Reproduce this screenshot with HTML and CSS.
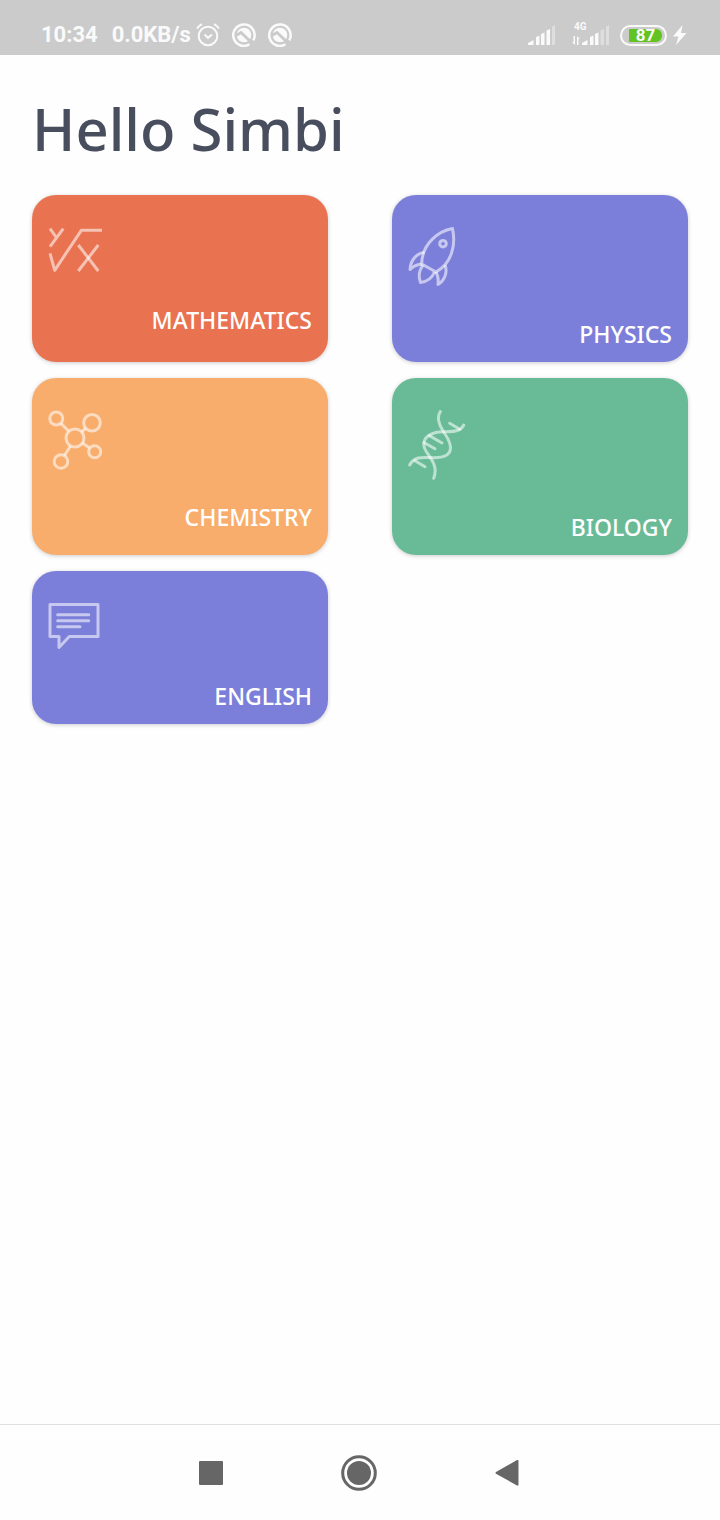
FILE: index.html
```html
<!DOCTYPE html>
<html lang="en">
<head>
<meta charset="utf-8">
<meta name="viewport" content="width=device-width, initial-scale=1">
<title>Hello Simbi</title>
<link rel="stylesheet" href="styles.css">
</head>
<body>
<header class="status">
  <div class="status-group">
    <span class="clock">10:34</span>
    <span class="speed">0.0KB/s</span>
    <svg class="alarm" width="24" height="24" viewBox="0 0 24 24" aria-hidden="true">
      <circle cx="12" cy="13" r="9.3"/><path d="M8.500 11.500l3.500 3.300 4-3.300M1 5.500Q2.500 3 6 1.200M23 5.500Q21.500 3 18 1.200"/>
    </svg>
    <svg class="badge" width="24" height="24" viewBox="0 0 24 24" aria-hidden="true">
      <path class="ring" d="M17.500 21.300A10.700 10.700 0 1 1 21.300 17.300"/>
      <circle class="fill" cx="12" cy="12" r="7.300"/>
      <path class="gap" d="M4 12.500L9 9.500 20 20"/>
    </svg>
    <svg class="badge" width="24" height="24" viewBox="0 0 24 24" aria-hidden="true">
      <path class="ring" d="M17.500 21.300A10.700 10.700 0 1 1 21.300 17.300"/>
      <circle class="fill" cx="12" cy="12" r="7.300"/>
      <path class="gap" d="M4 12.500L9 9.500 20 20"/>
    </svg>
  </div>
  <div class="status-group">
    <svg class="signal" width="28" height="20" viewBox="0 0 28 20" aria-hidden="true">
      <path d="M0 20v-2l5.500-3v5zM8 20v-8l3.500-1.500V20zM13 20V9l3.500-1.500V20zM18.500 20V5.500L22 4v16z"/><path class="dim" d="M24 20V2l3-2v20z"/>
    </svg>
    <div class="mobile">
      <span class="net">4G</span>
      <div class="mobile-row">
        <svg class="signal" width="8" height="9" viewBox="0 0 8 9" aria-hidden="true"><path d="M1.500 0h1.500v9L0 6h1.500zM5 9V0l3 3H6.500v6z"/></svg>
        <svg class="signal" width="28" height="20" viewBox="0 0 28 20" aria-hidden="true">
          <path d="M0 20v-2l5.500-3v5zM8 20v-8l3.500-1.500V20zM13 20V9l3.500-1.500V20z"/><path class="dim" d="M18.500 20V5.500L22 4v16zM24 20V2l3-2v20z"/>
        </svg>
      </div>
    </div>
    <div class="battery"><span class="level">87</span></div>
    <svg class="signal" width="14" height="20" viewBox="0 0 14 20" aria-hidden="true"><path d="M9.500 0L0 11.500h5.500L3 20 13.500 8H8z"/></svg>
  </div>
</header>

<main class="content">
  <h1 class="greeting">Hello Simbi</h1>
  <div class="subjects">
    <button type="button" class="card card-math">
      <svg class="icon" width="56" height="46" viewBox="0 0 56 46" aria-hidden="true">
        <path d="M2 1.700l6.300 8.600M15.300 1.700L2 19.700"/><path d="M2 26.300l4.700 17L33.300 3.300H54"/><path d="M30.300 18l20 26"/><path d="M50.300 18l-20 26"/>
      </svg>
      <span class="label">MATHEMATICS</span>
    </button>
    <button type="button" class="card card-violet">
      <svg class="icon" width="56" height="60" viewBox="0 0 56 60" aria-hidden="true">
        <path d="M44.500 1.500C31 4 14 16 13.700 37L28 45C44 36 48 18 44.500 1.500z"/><circle cx="35" cy="16.700" r="3.300"/>
        <path d="M16.500 25.500C8 26 2.500 34 2 42.500Q6 38 13.700 37"/><path d="M37 38C40 46 36 54 30 57.500Q31 51 28 45"/><path d="M15 38Q9 46 12.500 55.500Q23 54 26.500 45"/>
      </svg>
      <span class="label">PHYSICS</span>
    </button>
    <button type="button" class="card card-amber">
      <svg class="icon" width="56" height="60" viewBox="0 0 56 60" aria-hidden="true">
        <circle cx="8.300" cy="8.500" r="6.500"/><circle cx="44" cy="12.700" r="8.300"/><circle cx="27" cy="28" r="9"/><circle cx="46.700" cy="41.700" r="6"/><circle cx="13" cy="51.500" r="6.800"/>
        <path d="M12.800 13.200l8.200 8.300M37.800 18.300L33.500 22M34.300 33l7.500 5M22.500 36l-6 9.500"/>
      </svg>
      <span class="label">CHEMISTRY</span>
    </button>
    <button type="button" class="card card-green">
      <svg class="icon icon-round" width="60" height="70" viewBox="0 0 60 70" aria-hidden="true">
        <path d="M32.300 1.700C28 8 31 15 36 22.500C42 31 46 41 38 45.500C30 50 19 46 10.300 48Q4 50 1.700 55"/>
        <path d="M55.700 15C51 25 37 20 27 22.700C16 25.500 13 34 18.500 42C24 50 30 57 25.700 68.300"/>
        <path d="M41.700 13.300l10 6M21.500 25.700L34 33M16.300 32.700l10.700 6M7 50.700l10 6"/>
      </svg>
      <span class="label">BIOLOGY</span>
    </button>
    <button type="button" class="card card-violet">
      <svg class="icon" width="56" height="46" viewBox="0 0 56 46" aria-hidden="true">
        <path d="M2 1.500H50V33.500H21.300L11 44.500V33.500H2z"/><path d="M9.700 11.700h31M9.700 17.700h31M9.700 23.700H32" stroke-linecap="round"/>
      </svg>
      <span class="label">ENGLISH</span>
    </button>
  </div>
</main>

<nav class="navbar" aria-label="System">
  <button type="button" class="nav-button" aria-label="Recent apps"><svg width="24" height="24" viewBox="0 0 24 24"><rect width="24" height="24" rx="1"/></svg></button>
  <button type="button" class="nav-button" aria-label="Home"><svg width="36" height="36" viewBox="0 0 36 36"><circle cx="18" cy="18" r="12"/><circle class="outline" cx="18" cy="18" r="16.300"/></svg></button>
  <button type="button" class="nav-button" aria-label="Back"><svg width="24" height="28" viewBox="0 0 24 28"><path d="M1 13L22 1Q23.500 0.500 23.500 2V25.500Q23.500 27 22 26.500L1 14.700Q0 13.900 1 13z"/></svg></button>
</nav>
</body>
</html>
```
FILE: styles.css
```css
* { box-sizing: border-box; }

body {
  margin: 0;
  min-height: 100vh;
  display: flex;
  flex-direction: column;
  background: #fefefe;
  font-family: "Noto Sans", sans-serif;
}

button {
  border: 0;
  font: inherit;
  cursor: pointer;
}

.status {
  display: flex;
  justify-content: space-between;
  padding: 20px 33px 5px 41px;
  background: #cbcbcb;
  color: #fafafa;
  font-family: Roboto, sans-serif;
  font-weight: 700;
}

.status-group {
  display: flex;
  align-items: center;
  height: 30px;
}

.clock, .speed {
  font-size: 22px;
  line-height: 30px;
}

.speed { margin-left: 14px; }

.alarm {
  margin-left: 5px;
  fill: none;
  stroke: #fafafa;
  stroke-width: 2;
}

.badge { margin-left: 12px; }

.badge .ring {
  fill: none;
  stroke: #fafafa;
  stroke-width: 2.5;
}

.badge .fill { fill: #fafafa; }

.badge .gap {
  fill: none;
  stroke: #cbcbcb;
  stroke-width: 3;
}

.signal {
  flex: none;
  fill: #fafafa;
}

.signal .dim { fill: #dedede; }

.mobile {
  position: relative;
  margin-left: 16px;
}

.mobile-row {
  display: flex;
  align-items: flex-end;
  gap: 2px;
}

.net {
  position: absolute;
  top: -3px;
  left: 2px;
  font-size: 10px;
  line-height: 10px;
}

.battery {
  display: flex;
  width: 47px;
  height: 21px;
  margin: 0 6px 0 10px;
  padding: 2px 3px 2px 7px;
  border: 2px solid #fafafa;
  border-radius: 11px;
}

.level {
  flex: 1;
  border-radius: 1px 6px 6px 1px;
  background: #62c422;
  font-size: 17px;
  line-height: 13px;
  text-align: center;
}

.content {
  flex: 1;
  padding: 40px 32px;
}

.greeting {
  margin: 0 0 32px;
  color: #484e5e;
  font-size: 58px;
  font-weight: 500;
  line-height: 68px;
}

.subjects {
  display: grid;
  grid-template-columns: 1fr 1fr;
  gap: 16px 64px;
}

.card {
  display: flex;
  flex-direction: column;
  justify-content: flex-start;
  align-items: flex-start;
  gap: 32px;
  padding: 32px 16px 13px;
  border-radius: 24px;
  color: #fff;
  box-shadow: 0 1px 4px rgba(0, 0, 0, 0.2);
}

.card-math { background: #e97251; }
.card-violet { background: #7c7fd9; }
.card-amber { background: #f8ad6d; }
.card-green { background: #69bb98; }

.icon {
  fill: none;
  stroke: rgba(255, 255, 255, 0.57);
  stroke-width: 3;
  stroke-linejoin: round;
}

.icon-round { stroke-linecap: round; }

.label {
  align-self: flex-end;
  font-size: 23px;
  font-weight: 500;
  line-height: 30px;
}

.navbar {
  display: flex;
  justify-content: center;
  padding-right: 2px;
  border-top: 1px solid #e0e0e0;
}

.nav-button {
  display: flex;
  justify-content: center;
  align-items: center;
  width: 148px;
  height: 95px;
  padding: 0;
  background: none;
  fill: #666;
}

.outline {
  fill: none;
  stroke: #666;
  stroke-width: 3;
}
```
